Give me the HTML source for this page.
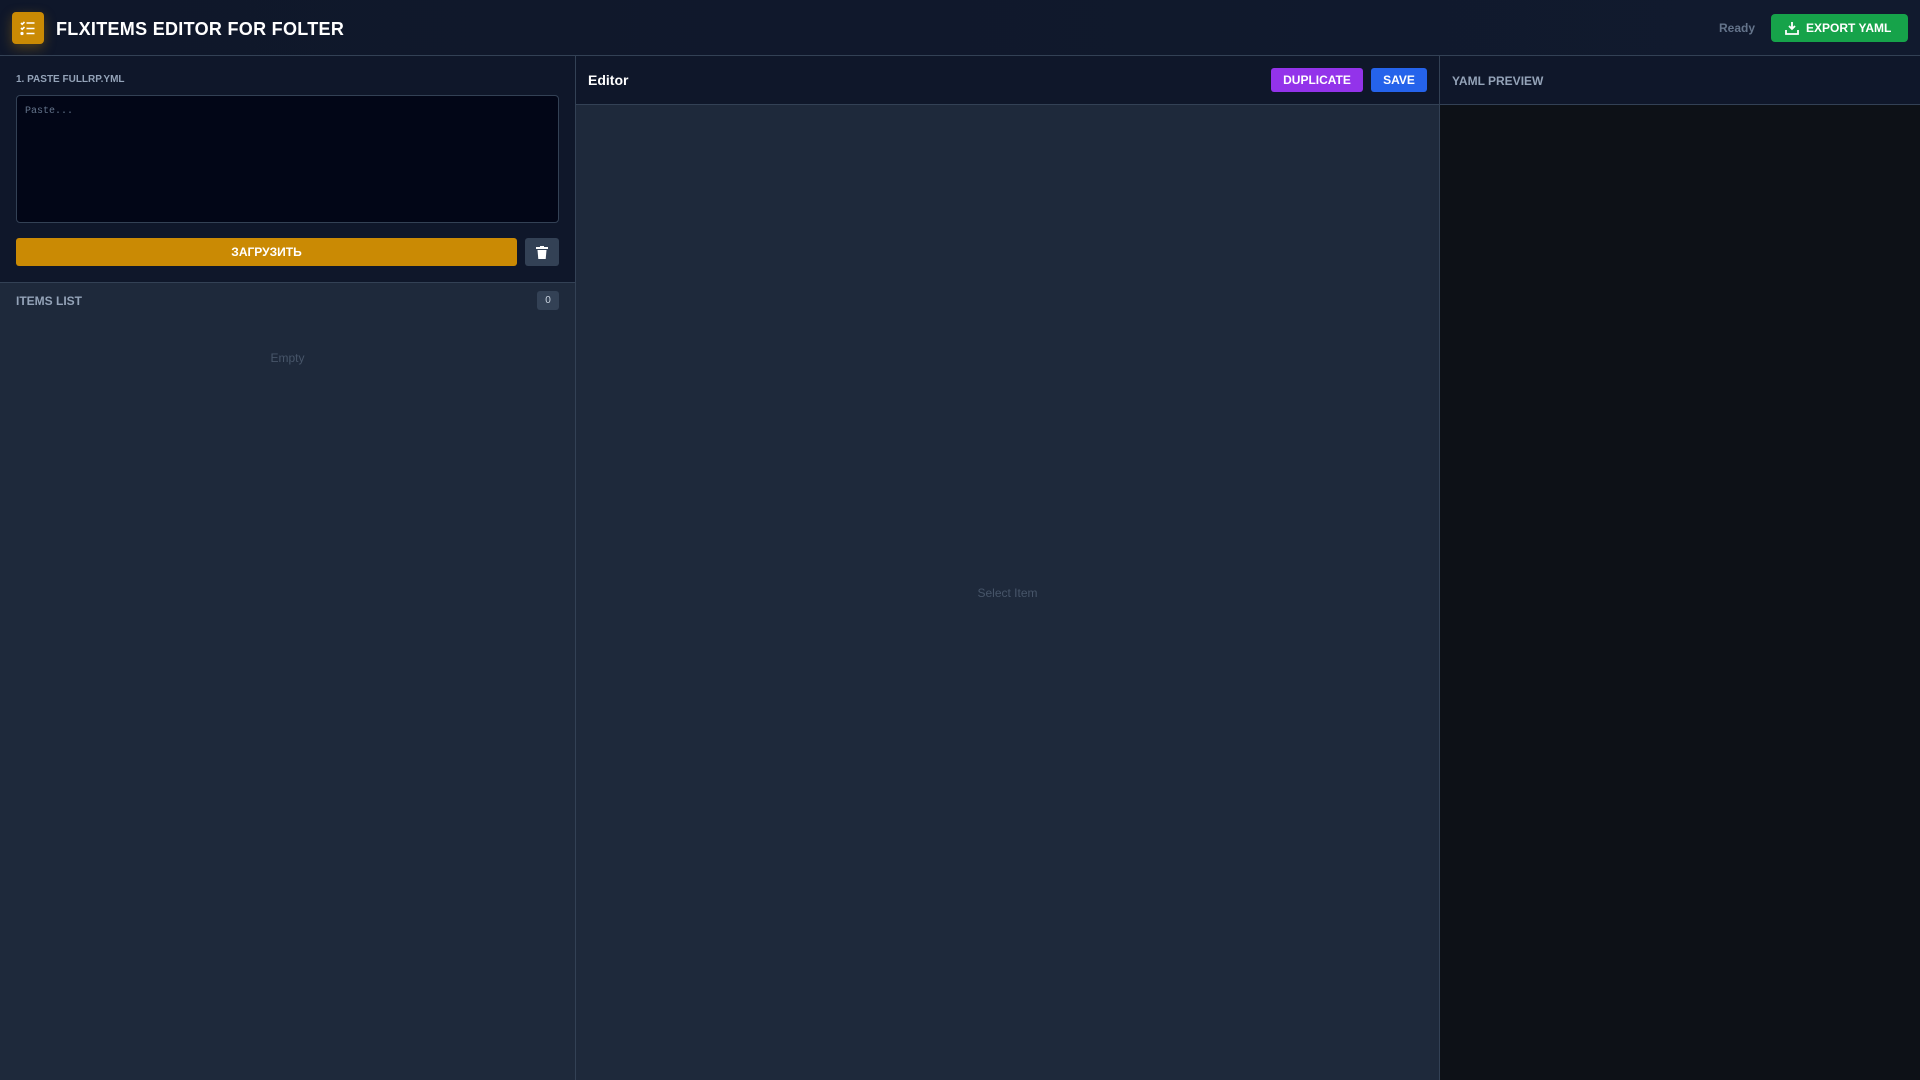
<!DOCTYPE html>
<html><head><meta charset="utf-8"><style>
*{box-sizing:border-box;margin:0;padding:0}
body{width:1920px;height:1080px;overflow:hidden;background:#1e293b;font-family:"Liberation Sans","Noto Sans CJK SC",sans-serif;position:relative}
.hdr{position:absolute;left:0;top:0;width:1920px;height:56px;background:linear-gradient(90deg,#0f172a,#111a2e);border-bottom:1px solid #334155}
.logo{position:absolute;left:12px;top:12px;width:32px;height:32px;background:#ca8a04;border-radius:4px;box-shadow:0 4px 12px rgba(202,138,4,.35)}
.title{position:absolute;left:56px;top:19px;font-size:18px;font-weight:bold;color:#fff;letter-spacing:.3px}
.ready{position:absolute;left:1719px;top:21px;font-size:12px;font-weight:bold;color:#64748b}
.exp{position:absolute;left:1771px;top:14px;width:137px;height:28px;background:#16a34a;border-radius:4px;color:#fff;font-size:12px;font-weight:bold;line-height:28px;padding-left:35px}
.left{position:absolute;left:0;top:56px;width:576px;height:1024px;border-right:1px solid #334155;background:#1e293b}
.ltop{position:absolute;left:0;top:0;width:575px;height:227px;background:#0f172a;border-bottom:1px solid #334155}
.lbl{position:absolute;left:16px;top:18px;font-size:10px;font-weight:bold;color:#94a3b8}
.ta{position:absolute;left:16px;top:39px;width:543px;height:128px;background:#020617;border:1px solid #334155;border-radius:4px;font-family:"Liberation Mono",monospace;font-size:10px;color:#64748b;padding:10px 8px}
.load{position:absolute;left:16px;top:182px;width:501px;height:28px;background:#ca8a04;border-radius:3px;color:#fff;font-size:12px;font-weight:bold;text-align:center;line-height:28px}
.trash{position:absolute;left:525px;top:182px;width:34px;height:28px;background:#334155;border-radius:3px}
.il{position:absolute;left:16px;top:238px;font-size:12px;font-weight:bold;color:#94a3b8}
.badge{position:absolute;left:537px;top:235px;width:22px;height:19px;background:#334155;border-radius:3px;color:#cbd5e1;font-size:10px;text-align:center;line-height:19px}
.empty{position:absolute;left:0;width:575px;top:295px;text-align:center;font-size:12px;color:#475569}
.mid{position:absolute;left:576px;top:56px;width:864px;height:1024px;background:#1e293b;border-right:1px solid #334155}
.mh{position:absolute;left:0;top:0;width:863px;height:49px;background:#0f172a;border-bottom:1px solid #334155}
.ed{position:absolute;left:12px;top:16px;font-size:14px;font-weight:bold;color:#fff}
.dup{position:absolute;left:695px;top:12px;width:92px;height:24px;background:#9333ea;border-radius:3px;color:#fff;font-size:12px;font-weight:bold;text-align:center;line-height:24px}
.save{position:absolute;left:795px;top:12px;width:56px;height:24px;background:#2563eb;border-radius:3px;color:#fff;font-size:12px;font-weight:bold;text-align:center;line-height:24px}
.sel{position:absolute;left:0;width:863px;top:530px;text-align:center;font-size:12px;color:#475569}
.right{position:absolute;left:1440px;top:56px;width:480px;height:1024px;background:#0d1117}
.rh{position:absolute;left:0;top:0;width:480px;height:49px;background:#0f172a;border-bottom:1px solid #334155}
.yp{position:absolute;left:12px;top:18px;font-size:12px;font-weight:bold;color:#94a3b8}
</style></head><body>
<div class="hdr">
<div class="logo"><svg width="32" height="32" viewBox="0 0 32 32"><g stroke="#fff" stroke-width="1.6" fill="none"><path d="M9 11l1.2 1.2L12.5 10"/><path d="M9 16l1.2 1.2L12.5 15"/><circle cx="10" cy="21.5" r=".8" fill="#fff"/><path d="M14.5 11h8M14.5 16.5h8M14.5 21.5h8"/></g></svg></div>
<div class="title">FLXITEMS EDITOR FOR FOLTER</div>
<div class="ready">Ready</div>
<div class="exp"><svg style="position:absolute;left:14px;top:7px" width="14" height="14" viewBox="0 0 14 14"><path d="M7 1v7M4 5l3 3 3-3" stroke="#fff" stroke-width="1.8" fill="none"/><path d="M1 9v4h12V9" stroke="#fff" stroke-width="1.8" fill="none"/></svg>EXPORT YAML</div>
</div>
<div class="left">
<div class="ltop">
<div class="lbl">1. PASTE FULLRP.YML</div>
<div class="ta">Paste...</div>
<div class="load">ЗАГРУЗИТЬ</div>
<div class="trash"><svg style="position:absolute;left:11px;top:8px" width="12" height="13" viewBox="0 0 12 13"><rect x="0" y="1" width="12" height="2" fill="#fff"/><rect x="4" y="0" width="4" height="2" fill="#fff"/><path d="M1.5 4h9l-.8 9H2.3z" fill="#fff"/></svg></div>
</div>
<div class="il">ITEMS LIST</div>
<div class="badge">0</div>
<div class="empty">Empty</div>
</div>
<div class="mid">
<div class="mh"><div class="ed">Editor</div><div class="dup">DUPLICATE</div><div class="save">SAVE</div></div>
<div class="sel">Select Item</div>
</div>
<div class="right"><div class="rh"><div class="yp">YAML PREVIEW</div></div></div>
</body></html>
